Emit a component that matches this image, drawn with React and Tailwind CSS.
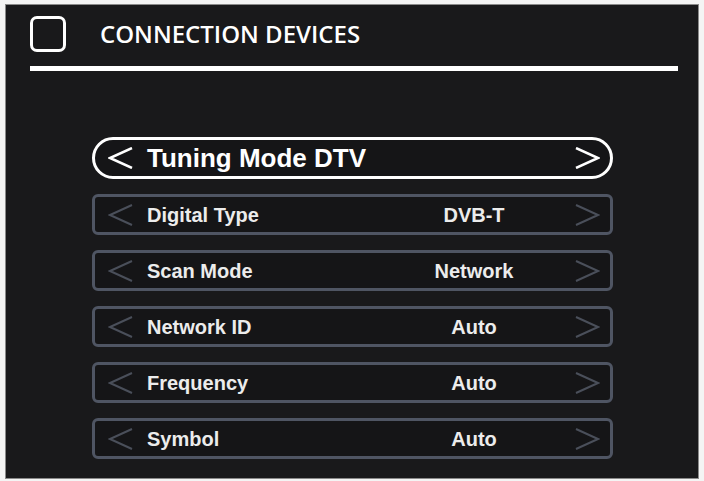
import React from "react"

const rows = [
  { label: "Digital Type", value: "DVB-T" },
  { label: "Scan Mode", value: "Network" },
  { label: "Network ID", value: "Auto" },
  { label: "Frequency", value: "Auto" },
  { label: "Symbol", value: "Auto" },
]

function Chevron({ dir = "left", width = 2, className = "" }) {
  // thin open chevron, like the TV OSD arrows
  const d = dir === "left" ? "M24 1 L2 11 L24 21" : "M1 1 L23 11 L1 21"
  return (
    <svg width="25" height="22" viewBox="0 0 25 22" className={className} fill="none">
      <path d={d} stroke="currentColor" strokeWidth={width} strokeLinejoin="miter" />
    </svg>
  )
}

function OptionRow({ label, value }) {
  return (
    <div className="flex h-[41px] items-center rounded-[6px] border-[3px] border-[#4f5563] bg-[#151517]">
      <Chevron dir="left" className="ml-[13px] text-[#4a4f5a]" />
      <div className="ml-[14px] w-[267px] text-[20px] font-bold text-[#ececec]">{label}</div>
      <div className="w-[120px] text-center text-[20px] font-bold text-[#ececec]">{value}</div>
      <div className="flex-1" />
      <Chevron dir="right" className="mr-[10px] text-[#4a4f5a]" />
    </div>
  )
}

export default function App() {
  return (
    <div className="h-[481px] w-[704px] bg-[#f4f4f4] pl-[5px] pt-[4px]">
      <div className="h-[475px] w-[694px] border border-[#8a8a8a] bg-[#19191b]">
        <div className="flex items-center pl-[24px] pt-[11px]">
          <div className="h-[36px] w-[36px] rounded-[7px] border-[3px] border-white" />
          <div
            className="ml-[34px] text-[24px] font-semibold leading-none text-white"
            style={{ fontFamily: '"Open Sans", sans-serif' }}
          >
            CONNECTION DEVICES
          </div>
        </div>
        <div className="ml-[24px] mt-[14px] h-[5px] w-[648px] bg-white" />

        <div
          className="ml-[86px] mt-[66px] flex w-[521px] flex-col gap-[15px]"
          style={{ fontFamily: '"Liberation Sans", Arial, sans-serif' }}
        >
          <div className="flex h-[42px] items-center rounded-full border-[3px] border-white bg-[#151517]">
            <Chevron dir="left" width={2.5} className="ml-[13px] text-white" />
            <div className="ml-[14px] text-[26px] font-bold text-white">Tuning Mode DTV</div>
            <div className="flex-1" />
            <Chevron dir="right" width={2.5} className="mr-[10px] text-white" />
          </div>
          {rows.map((r) => (
            <OptionRow key={r.label} label={r.label} value={r.value} />
          ))}
        </div>
      </div>
    </div>
  )
}
